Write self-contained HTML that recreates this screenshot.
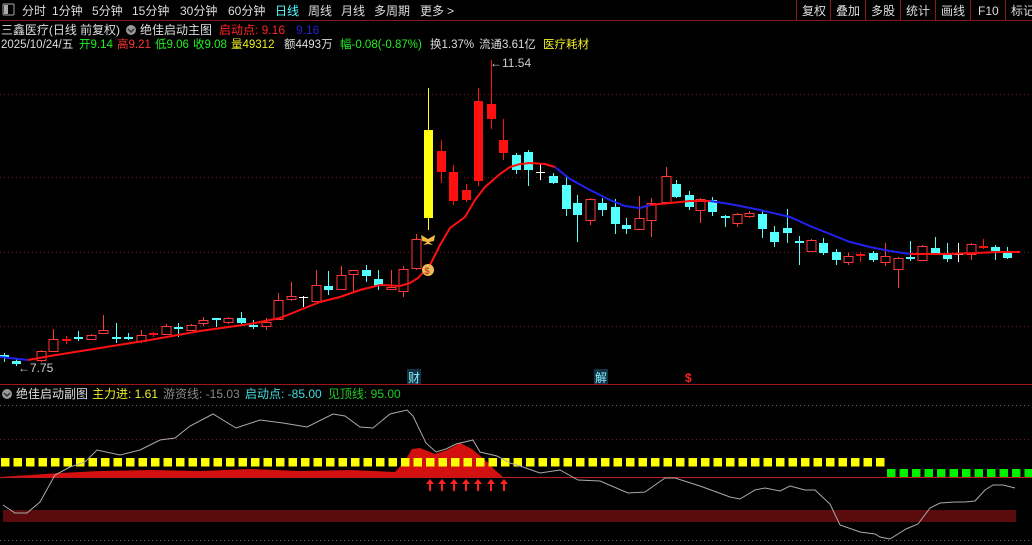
<!DOCTYPE html>
<html><head><meta charset="utf-8"><style>
html,body{margin:0;padding:0;background:#000;width:1032px;height:545px;overflow:hidden;font-family:"Liberation Sans","Noto Sans CJK SC",sans-serif;}
svg{position:absolute;left:0;top:0}
</style></head><body>
<svg id="s" width="1032" height="545" xmlns="http://www.w3.org/2000/svg" font-family="Liberation Sans, Noto Sans CJK SC, sans-serif" font-size="12">
<rect x="0" y="0" width="1032" height="21" fill="#000"/>
<line x1="0" y1="20.5" x2="1032" y2="20.5" stroke="#8a1a1a"/>
<rect x="3" y="4" width="11" height="11" fill="none" stroke="#aaa" rx="1"/><rect x="4" y="5" width="4" height="9" fill="#aaa"/>
<g fill="#ddd" font-size="12">
<text x="22" y="15">分时</text><text x="52" y="15">1分钟</text><text x="92" y="15">5分钟</text><text x="132" y="15">15分钟</text><text x="180" y="15">30分钟</text><text x="228" y="15">60分钟</text>
<text x="275" y="15" fill="#5ff">日线</text><text x="308" y="15">周线</text><text x="341" y="15">月线</text><text x="374" y="15">多周期</text><text x="420" y="15">更多</text><text x="447" y="15">&gt;</text>
<text x="802" y="15">复权</text><text x="836" y="15">叠加</text><text x="871" y="15">多股</text><text x="906" y="15">统计</text><text x="941" y="15">画线</text><text x="978" y="15">F10</text><text x="1011" y="15">标记</text>
</g>
<g stroke="#8a1a1a"><line x1="796.5" y1="0" x2="796.5" y2="20"/><line x1="830.5" y1="0" x2="830.5" y2="20"/><line x1="865.5" y1="0" x2="865.5" y2="20"/><line x1="900.5" y1="0" x2="900.5" y2="20"/><line x1="935.5" y1="0" x2="935.5" y2="20"/><line x1="970.5" y1="0" x2="970.5" y2="20"/><line x1="1005.5" y1="0" x2="1005.5" y2="20"/></g>
<text x="1" y="34" fill="#ddd" textLength="119" lengthAdjust="spacingAndGlyphs">三鑫医疗(日线 前复权)</text>
<circle cx="131" cy="30" r="5" fill="#999"/><path d="M128 29l3 3 3-3" stroke="#333" fill="none" stroke-width="1.5"/>
<text x="140" y="34" fill="#ddd" textLength="72" lengthAdjust="spacingAndGlyphs">绝佳启动主图</text>
<text x="219" y="34" fill="#f22">启动点: 9.16</text><text x="296" y="34" fill="#22c">9.16</text>
<g font-size="11.5">
<text x="1" y="48" fill="#ddd">2025/10/24/五</text>
<text x="79" y="48" fill="#2e2">开9.14</text><text x="117" y="48" fill="#f33">高9.21</text><text x="155" y="48" fill="#2e2">低9.06</text><text x="193" y="48" fill="#2e2">收9.08</text>
<text x="231" y="48" fill="#ee2">量49312</text><text x="284" y="48" fill="#ddd">额4493万</text><text x="340" y="48" fill="#2e2">幅-0.08(-0.87%)</text>
<text x="430" y="48" fill="#ddd">换1.37%</text><text x="479" y="48" fill="#ddd">流通3.61亿</text><text x="543" y="48" fill="#ee2">医疗耗材</text>
</g>
<g stroke="#7a1515" stroke-dasharray="1 3"><line x1="0" y1="94.5" x2="1032" y2="94.5"/><line x1="0" y1="177.5" x2="1032" y2="177.5"/><line x1="0" y1="252.5" x2="1032" y2="252.5"/><line x1="0" y1="326.5" x2="1032" y2="326.5"/>
<line x1="0" y1="405.5" x2="1032" y2="405.5" stroke="#666"/><line x1="0" y1="439.5" x2="1032" y2="439.5"/><line x1="0" y1="540.5" x2="1032" y2="540.5" stroke="#666"/></g>
<g id="c"></g>
<polyline fill="none" stroke="#22e" stroke-width="2" points="0,357 28,360"/>
<polyline fill="none" stroke="#f11" stroke-width="2" points="28,360 50,356 100,348 150,340 200,331 250,324 280,318 300,310 320,302 340,297 360,290 380,285 400,286 410,283 418,278 430,265 440,245 450,228 465,217 475,200 485,187 500,174 510,167 520,164 530,163 545,164 555,167"/>
<polyline fill="none" stroke="#22e" stroke-width="2" points="555,167 570,179 590,190 610,200 625,206 640,208 650,205"/>
<polyline fill="none" stroke="#f11" stroke-width="2" points="650,205 670,203 690,201 710,201"/>
<polyline fill="none" stroke="#22e" stroke-width="2" points="710,201 730,204 760,210 790,217 810,226 830,234 850,242 870,247 890,251 910,254"/>
<polyline fill="none" stroke="#f11" stroke-width="2" points="910,254 950,254 1000,252 1020,252"/>
<text x="18" y="372" fill="#ccc">←7.75</text>
<text x="490" y="67" fill="#ccc">←11.54</text>
<path d="M428 239 l-7 -4 l1 6 l5 1 l-4 3 l5 -1z M428 239 l7 -4 l-1 6 l-5 1 l4 3 l-5 -1z" fill="#eb4"/>
<circle cx="428" cy="270" r="6" fill="#eb5"/><text x="424.5" y="274" font-size="9" fill="#a22">$</text>
<rect x="407" y="369" width="14" height="15" fill="#134"/><text x="408" y="382" fill="#8ef">财</text>
<rect x="594" y="369" width="14" height="15" fill="#134"/><text x="595" y="382" fill="#8ef">解</text>
<text x="685" y="382" fill="#f22" font-size="12" font-weight="bold">$</text>
<line x1="0" y1="384.5" x2="1032" y2="384.5" stroke="#a01515"/>
<circle cx="7" cy="394" r="5" fill="#999"/><path d="M4 393l3 3 3-3" stroke="#333" fill="none" stroke-width="1.5"/>
<text x="16" y="398" fill="#ddd">绝佳启动副图</text>
<text x="92" y="398" fill="#ee2">主力进: 1.61</text><text x="163" y="398" fill="#888">游资线: -15.03</text>
<text x="245" y="398" fill="#4dd">启动点: -85.00</text><text x="328" y="398" fill="#2c2">见顶线: 95.00</text>
<rect x="3" y="510" width="1013" height="12" fill="#5a0c0c"/>
<path d="M0 477 L60 473 L100 471 L150 470 L200 471 L250 469 L300 471 L350 470 L395 472 L405 461 L412 449 L420 448 L435 454 L447 450 L460 443 L472 449 L485 460 L495 470 L503 477Z" fill="#d31010"/>
<line x1="0" y1="477.5" x2="1032" y2="477.5" stroke="#c01818"/>
<g id="sq"></g>
<polyline fill="none" stroke="#aaa" stroke-width="1" points="3,505 15,513 27,513 40,502 55,475 70,467 85,462 97,450 120,455 140,450 160,440 175,438 190,426 213,414 236,428 260,420 283,423 307,427 333,414 345,416 360,427 373,428 390,414 407,410 413,416 426,443 436,452 446,449 456,444 473,440 480,452 497,456 510,463 520,466 540,473 560,470 578,480 600,481 628,493 645,492 665,478 675,478 700,486 730,497 740,499 755,490 765,488 780,491 790,486 805,490 815,490 830,504 840,525 860,532 875,534 880,537 890,539 906,529 918,524 930,508 940,503 955,502 965,502 975,501 985,490 993,485 1003,485 1015,488"/>
<g id="ar" fill="#f22"></g>
</svg>
<script>
var NS="http://www.w3.org/2000/svg";
function el(p,t,a){var e=document.createElementNS(NS,t);for(var k in a)e.setAttribute(k,a[k]);p.appendChild(e);return e;}
var C=[[4,355,358,353,362,'c'],[16,361,364,358,366,'c'],[41,351,360,350,362,'r'],[53,339,351,329,352,'r'],[66,339,341,336,344,'R'],[78,337,338,331,341,'c'],[91,335,339,334,340,'r'],[103,330,333,315,334,'r'],[116,337,338,323,343,'c'],[128,337,338,333,340,'c'],[141,335,341,330,343,'r'],[153,333,335,332,337,'R'],[166,326,334,324,335,'r'],[178,327,328,323,337,'c'],[191,325,330,324,331,'r'],[203,320,323,317,326,'r'],[216,318,319,318,327,'c'],[228,318,322,317,324,'r'],[241,318,323,312,324,'c'],[253,325,326,320,329,'c'],[266,322,326,318,330,'r'],[278,300,319,293,320,'r'],[291,296,299,282,301,'r'],[303,297,298,296,307,'w'],[316,285,301,270,302,'r'],[328,286,290,271,295,'c'],[341,275,289,266,290,'r'],[353,270,274,270,293,'r'],[366,270,276,265,282,'c'],[378,279,286,270,290,'c'],[391,287,289,270,290,'r'],[403,269,291,266,297,'r'],[416,239,268,234,270,'r'],[428,130,218,88,230,'y'],[441,151,172,140,183,'R'],[453,172,201,165,205,'R'],[466,190,200,184,202,'R'],[478,101,181,88,186,'R'],[491,104,119,60,129,'R'],[503,140,153,119,160,'R'],[516,155,170,153,174,'c'],[528,152,170,150,186,'c'],[540,172,173,163,180,'w'],[553,176,183,173,184,'c'],[566,185,209,177,216,'c'],[577,203,215,195,242,'c'],[590,199,220,198,225,'r'],[602,203,210,198,216,'c'],[615,207,224,199,234,'c'],[626,225,229,218,234,'c'],[639,218,229,196,230,'r'],[651,203,220,198,237,'r'],[666,176,202,167,203,'r'],[676,184,197,180,198,'c'],[689,195,207,191,210,'c'],[700,199,210,198,223,'r'],[712,200,212,197,216,'c'],[725,216,218,215,227,'c'],[737,214,223,213,227,'r'],[749,213,216,211,218,'r'],[762,214,229,210,238,'c'],[774,232,242,226,247,'c'],[787,228,233,209,243,'c'],[799,241,243,236,265,'c'],[811,240,251,239,252,'r'],[823,243,253,238,255,'c'],[836,252,260,249,265,'c'],[848,256,262,253,265,'r'],[860,254,256,252,262,'R'],[873,253,260,251,262,'c'],[885,256,262,243,266,'r'],[898,258,269,257,288,'r'],[910,257,258,241,261,'c'],[922,246,260,245,261,'r'],[935,248,253,237,254,'c'],[947,254,259,243,262,'c'],[958,254,255,243,262,'w'],[971,244,254,243,260,'r'],[983,246,248,239,249,'R'],[995,247,251,245,260,'c'],[1007,253,258,247,259,'c']];
var g=document.getElementById('c');
C.forEach(function(d){var x=d[0],col={c:'#54ffff',r:'#ff3838',R:'#ff1010',w:'#ffffff',y:'#ffff10'}[d[5]];
el(g,'line',{x1:x+.5,y1:d[3],x2:x+.5,y2:d[4],stroke:col});
var h=Math.max(d[2]-d[1],1);
if(d[5]=='r')el(g,'rect',{x:x-4,y:d[1]+.5,width:9,height:h,fill:'#000',stroke:col});
else if(d[5]=='w')el(g,'rect',{x:x-4,y:d[1],width:9,height:1,fill:col});
else el(g,'rect',{x:x-4,y:d[1],width:9,height:h<2?2:h,fill:col});});
var s=document.getElementById('sq');
for(var x=1;x<884;x+=12.5)el(s,'rect',{x:x,y:458,width:8.5,height:8.5,fill:'#ffff00'});
for(var x=887;x<1030;x+=12.5)el(s,'rect',{x:x,y:469,width:8.5,height:8,fill:'#00ee00'});
var a=document.getElementById('ar');
[430,442,454,466,478,491,504].forEach(function(x){el(a,'path',{d:'M'+x+' 479 l-4 5 h3 v7 h2 v-7 h3z'});});
</script>
</body></html>
